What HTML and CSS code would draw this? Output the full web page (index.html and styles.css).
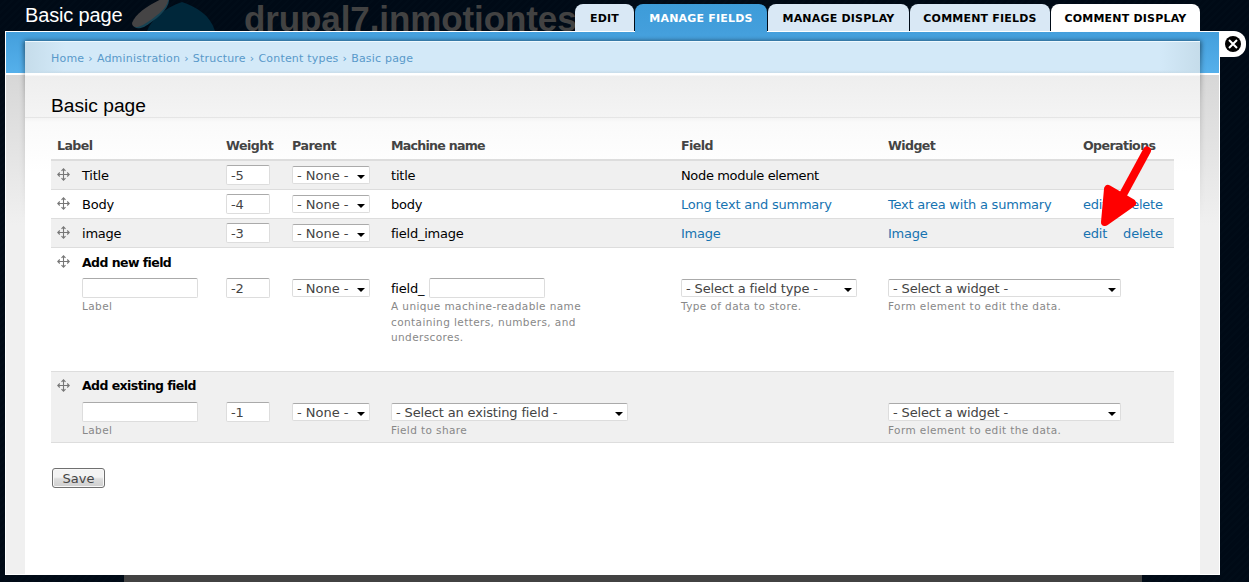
FILE: index.html
```html
<!DOCTYPE html>
<html lang="en">
<head>
<meta charset="utf-8">
<title>Basic page</title>
<link rel="stylesheet" href="styles.css">
</head>
<body>
<svg width="0" height="0" class="defs"><symbol id="move" viewBox="0 0 13 13"><path d="M6.5 1v11M1 6.5h11M4.5 2.8l2-2 2 2M4.5 10.2l2 2 2-2M2.8 4.5l-2 2 2 2M10.2 4.5l2 2-2 2" fill="none" stroke="#777" stroke-width="1.1"/></symbol></svg>
<div class="site">
  <svg class="logo" width="100" height="31" viewBox="0 0 100 31"><path d="M18 31C22 20 35 8 53 2C68 7 81 15 86 31Z" fill="#00273a"/><path d="M4 24C8 13 24 3 40-3C42 8 28 19 15 27C9 29 5 29 4 24Z" fill="#174354"/><path d="M3 23C7 12 23 3 39-4C42 6 27 17 14 25C8 28 3 28 3 23Z" fill="#454445"/></svg>
  <div class="site-name">drupal7.inmotiontes</div>
</div>
<header class="top">
  <h1 class="title">Basic page</h1>
  <nav class="tabs">
    <a class="tab t1">EDIT</a><a class="tab t2 active">MANAGE FIELDS</a><a class="tab t3">MANAGE DISPLAY</a><a class="tab t4">COMMENT FIELDS</a><a class="tab t5 hover">COMMENT DISPLAY</a>
  </nav>
</header>
<div class="frame">
<div class="overlay">
  <main class="panel">
    <nav class="crumbs"><a>Home</a><i>›</i><a>Administration</a><i>›</i><a>Structure</a><i>›</i><a>Content types</a><i>›</i><a>Basic page</a></nav>
    <div class="heading"><h2>Basic page</h2></div>
    <div class="table">
      <div class="row head"><b class="first">Label</b><b>Weight</b><b>Parent</b><b>Machine name</b><b>Field</b><b>Widget</b><b>Operations</b></div>
      <div class="row odd"><svg class="move"><use href="#move"/></svg><span class="cell">Title</span><span class="input num">-5</span><span class="select none">- None -</span><span class="cell">title</span><span class="cell tight">Node module element</span><span></span><span></span></div>
      <div class="row"><svg class="move"><use href="#move"/></svg><span class="cell">Body</span><span class="input num">-4</span><span class="select none">- None -</span><span class="cell">body</span><a class="cell">Long text and summary</a><a class="cell">Text area with a summary</a><span class="ops cell"><a>edit</a><a>delete</a></span></div>
      <div class="row odd"><svg class="move"><use href="#move"/></svg><span class="cell">image</span><span class="input num">-3</span><span class="select none">- None -</span><span class="cell">field_image</span><a class="cell">Image</a><a class="cell">Image</a><span class="ops cell"><a>edit</a><a>delete</a></span></div>
      <div class="group new">
        <div class="row plain"><svg class="move"><use href="#move"/></svg><strong class="cell">Add new field</strong></div>
        <div class="row fields">
          <span></span>
          <div><span class="input wide"></span><small>Label</small></div>
          <div><span class="input num">-2</span></div>
          <div><span class="select none">- None -</span></div>
          <div><div class="prefix"><span class="cell">field_</span><span class="input wide"></span></div><small>A unique machine-readable name<br>containing letters, numbers, and<br>underscores.</small></div>
          <div><span class="select type">- Select a field type -</span><small>Type of data to store.</small></div>
          <div><span class="select widget">- Select a widget -</span><small>Form element to edit the data.</small></div>
        </div>
      </div>
      <div class="group existing odd">
        <div class="row plain"><svg class="move"><use href="#move"/></svg><strong>Add existing field</strong></div>
        <div class="row fields">
          <span></span>
          <div><span class="input wide"></span><small>Label</small></div>
          <div><span class="input num">-1</span></div>
          <div><span class="select none">- None -</span></div>
          <div><span class="select exist">- Select an existing field -</span><small>Field to share</small></div>
          <div></div>
          <div><span class="select widget">- Select a widget -</span><small>Form element to edit the data.</small></div>
        </div>
      </div>
    </div>
    <button class="save">Save</button>
  </main>
</div>
<div class="close"><svg width="16" height="16" viewBox="0 0 16 16"><circle cx="8" cy="8" r="8" fill="#000"/><path d="M4 4l8 8M12 4l-8 8" stroke="#fff" stroke-width="2"/></svg></div>
</div>
<div class="below"></div>
<svg class="arrow" width="60" height="90" viewBox="0 0 60 90"><path d="M51 8.5L23 60" stroke="#f00" stroke-width="8" stroke-linecap="round"/><path d="M12 47L9 80L36 61Z" fill="#f00" stroke="#f00" stroke-width="8" stroke-linejoin="round"/></svg>
</body>
</html>
```
FILE: styles.css
```css
* { box-sizing: border-box; }
body {
  margin: 0; height: 582px; overflow: hidden; position: relative;
  font: 13px/18px "DejaVu Sans", Verdana, sans-serif; color: #000;
  background: repeating-linear-gradient(135deg, #000a16 0 3px, #010c18 3px 5px);
}
.defs { position: absolute; }
.site { position: absolute; left: 0; top: 0; width: 1249px; height: 31px; overflow: hidden; }
.logo { position: absolute; left: 129px; top: 0; }
.site-name {
  position: absolute; left: 244px; top: -1px; color: #424242; white-space: nowrap;
  font: bold 35px/40px "Liberation Sans", Arial, sans-serif; letter-spacing: -.1px;
}
.top { position: relative; z-index: 1; height: 31px; padding: 4px 49px 0 25px; display: flex; justify-content: space-between; }
.title { margin: 0; color: #fff; font: 20px/22px "Liberation Sans", Arial, sans-serif; letter-spacing: -.15px; }
.tabs { display: flex; gap: 1px; }
.tab {
  height: 27px; border-radius: 8px 8px 0 0; background: #d9e8f5; color: #000;
  font-weight: bold; font-size: 11px; line-height: 29px; text-align: center; white-space: nowrap; letter-spacing: .2px;
}
.t1 { width: 59px; } .t2 { width: 132px; } .t3 { width: 141px; } .t4 { width: 140px; } .t5 { width: 149px; }
.tab.active { height: 28px; background: linear-gradient(#3d9cd9, #449fdc); color: #fff; }
.tab.hover { background: #fff; }
.frame { display: flex; align-items: flex-start; padding-left: 5px; }
.overlay {
  position: relative; z-index: 0;
  width: 1215px; height: 544px; border: 1px solid #fff; padding: 9px 19px 0;
  background: linear-gradient(#449fdc, #55b0eb) 0 0 / 100% 41px no-repeat,
    linear-gradient(#fff, #fff) 0 41px / 100% 2px no-repeat,
    linear-gradient(#d7d7d7, #f0f0f0 150px) 0 43px / 100% 500px no-repeat;
}
.panel {
  position: relative;
  height: 533px; width: 1175px; padding: 0 26px;
  border: solid #eef9ff; border-width: 1px 0 0;
  background:
    linear-gradient(90deg, #c5dcea, transparent 40px calc(100% - 40px), #c5dcea) 0 0 / 100% 31px no-repeat,
    linear-gradient(#d3e9f8 0 28px, #c8dce9 31px, #fff 31px 33px, #eee 34px, #f4f4f4 76px, #fafafa 80px, #fff 130px);
}
.panel::before {
  content: ""; position: absolute; z-index: -1; inset: -1px -1px auto; height: 180px;
  background: linear-gradient(rgba(0,0,0,.6), rgba(0,0,0,.3) 30px, rgba(0,0,0,.16) 60px, transparent);
  filter: blur(2.5px);
}
.crumbs { display: flex; height: 32px; align-items: center; font-size: 11px; color: #5999ca; padding-top: 1px; letter-spacing: .2px; }
.crumbs i { font-style: normal; margin: 0 4px; }
.heading { height: 44px; margin: 0 -26px; padding: 12px 26px 0; border-bottom: 1px solid #e5e5e5; }
h2 { margin: 0; font: 19.2px/22px "Liberation Sans", Arial, sans-serif; margin-top: 9px; }
.table { letter-spacing: -.22px; }
.row { display: grid; grid-template-columns: 31px 144px 66px 99px 290px 207px 195px 91px; height: 29px; align-items: center; border-bottom: 1px solid #ddd; white-space: nowrap; }
.table a { color: #1673b1; }
.cell { padding-top: 2px; }
.tight { letter-spacing: -.35px; }
.head { height: 43px; color: #444; border-bottom: 2px solid #ddd; padding-top: 15px; font-size: 12.6px; letter-spacing: -.6px; }
.head b:nth-child(2), .head b:nth-child(3) { letter-spacing: -.5px; }
.head b:nth-child(4) { letter-spacing: -.75px; }
.first { grid-column: 1 / 3; padding-left: 6px; }
.odd { background: #f0f0f0; }
.move { width: 13px; height: 13px; margin: 0 0 2px 6px; }
.input, .select { display: block; border: 1px solid #ddd; border-top-color: #aaa; border-radius: 2px; background: #fff; color: #444; }
.input { height: 20px; line-height: 19px; padding-left: 4px; }
.num { width: 44px; }
.wide { width: 116px; }
.select { position: relative; height: 18px; line-height: 18px; padding-left: 4px; letter-spacing: -.15px; }
.select::after { content: ""; position: absolute; right: 4px; top: 8px; border: 4px solid transparent; border-top-color: #000; border-bottom: 0; }
.none { width: 78px; letter-spacing: 0; } .type { width: 176px; } .widget { width: 233px; } .exist { width: 237px; }
.ops { display: flex; gap: 16px; }
.group { border-bottom: 1px solid #ddd; }
.new { height: 124px; }
.existing { height: 71px; }
.plain { border: 0; height: 28px; }
.fields { border: 0; height: auto; align-items: start; padding-top: 2px; }
.fields .select { margin-top: 1px; }
.fields .select + small { margin-top: 1px; }
.prefix { display: flex; align-items: center; height: 20px; }
.prefix > .cell { width: 38px; }
strong { font-size: 12.5px; letter-spacing: -.57px; }
small { display: block; font-size: 10.5px; line-height: 15.5px; color: #888; letter-spacing: .4px; padding-top: 1px; }
.save {
  display: block; margin: 25px 0 0 1px; width: 53px; height: 20px; padding: 0; color: #444;
  border: 1px solid #707070; border-radius: 3px; font: 13px/19px "DejaVu Sans", Verdana, sans-serif;
  background: linear-gradient(#f3f3f3 0 45%, #ddd 55%, #cfcfcf); box-shadow: inset 0 0 0 1px #f8f8f8;
}
.close { width: 26px; height: 26px; padding: 5px; background: #fff; border-radius: 0 12px 12px 0; }
.below { height: 7px; margin: 0 107px 0 124px; background: #424242; }
.arrow { position: absolute; left: 1096px; top: 142px; z-index: 2; }
```
